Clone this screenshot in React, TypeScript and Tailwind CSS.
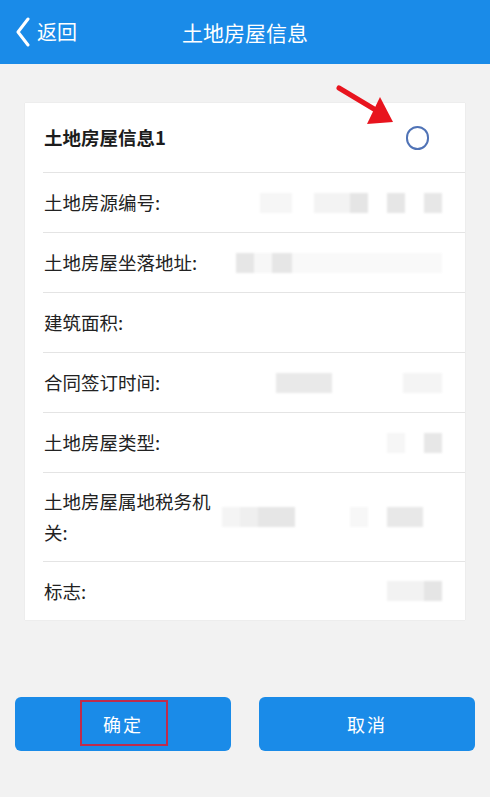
const FONT = { fontFamily: '"Noto Sans CJK SC", "Noto Sans", sans-serif' };

type Block = { w: number; c: string; gap?: number };

// blurred (redacted) values shown as soft mosaic blocks
function Mosaic({ blocks, h = 20 }: { blocks: Block[]; h?: number }) {
  return (
    <div className="flex items-center blur-[1px]">
      {blocks.map((b, i) => (
        <div
          key={i}
          style={{ width: b.w, height: h, background: b.c, marginLeft: b.gap ?? 0 }}
        />
      ))}
    </div>
  );
}

const ROWS: { label: string; h: number; blocks: Block[] }[] = [
  {
    label: "土地房源编号:",
    h: 60,
    blocks: [
      { w: 32, c: "#f6f6f6" },
      { w: 36, c: "#f3f3f3", gap: 22 },
      { w: 18, c: "#e5e5e5" },
      { w: 18, c: "#e6e6e6", gap: 19 },
      { w: 18, c: "#e7e7e7", gap: 19 },
    ],
  },
  {
    label: "土地房屋坐落地址:",
    h: 60,
    blocks: [
      { w: 18, c: "#e6e6e6" },
      { w: 18, c: "#f7f7f7" },
      { w: 20, c: "#e6e6e6" },
      { w: 150, c: "#f9f9f9" },
    ],
  },
  { label: "建筑面积:", h: 60, blocks: [] },
  {
    label: "合同签订时间:",
    h: 60,
    blocks: [
      { w: 56, c: "#e9e9e9" },
      { w: 39, c: "#f4f4f4", gap: 71 },
    ],
  },
  {
    label: "土地房屋类型:",
    h: 60,
    blocks: [
      { w: 18, c: "#f6f6f6" },
      { w: 18, c: "#e7e7e7", gap: 19 },
    ],
  },
  {
    label: "土地房屋属地税务机关:",
    h: 89,
    blocks: [
      { w: 18, c: "#f4f4f4" },
      { w: 18, c: "#efefef" },
      { w: 37, c: "#e6e6e6" },
      { w: 18, c: "#f7f7f7", gap: 55 },
      { w: 36, c: "#e8e8e8", gap: 19 },
      { w: 19, c: "transparent" },
    ],
  },
  {
    label: "标志:",
    h: 59,
    blocks: [
      { w: 37, c: "#f2f2f2" },
      { w: 18, c: "#e5e5e5" },
    ],
  },
];

export default function App() {
  return (
    <div className="relative min-h-[797px] w-[490px] bg-[#f2f2f2]" style={FONT}>
      {/* Header */}
      <div className="grid h-16 grid-cols-[1fr_auto_1fr] items-center bg-[#1a8be8] text-white">
        <div className="flex items-center gap-[7px] pl-4">
          <svg width="14" height="30" viewBox="0 0 14 30" fill="none">
            <path d="M12 2 L2 15 L12 28" stroke="white" strokeWidth="3" strokeLinecap="round" strokeLinejoin="round" />
          </svg>
          <span className="text-[20px] leading-none">返回</span>
        </div>
        <h1 className="text-[21px] leading-none">土地房屋信息</h1>
        <div />
      </div>

      {/* Card */}
      <div className="mx-[25px] mt-[39px] bg-white shadow-[0_0_1px_rgba(0,0,0,0.12)]">
        <div className="ml-[18px] flex h-[69px] items-center justify-between pl-[1px] pr-[36px]">
          <span className="text-[18.5px] font-bold text-[#1c1c1c]">土地房屋信息1</span>
          <span className="h-[24px] w-[23px] rounded-full border-2 border-[#5073b6]" />
        </div>
        {ROWS.map((r) => (
          <div
            key={r.label}
            className="ml-[18px] flex items-center justify-between border-t border-[#e4e4e4] pl-[1px] pr-[23px]"
            style={{ height: r.h }}
          >
            <span className="w-[176px] text-[18.5px] leading-[31px] text-[#222]">{r.label}</span>
            <Mosaic blocks={r.blocks} />
          </div>
        ))}
      </div>

      {/* Buttons */}
      <div className="mt-[77px] flex gap-[28px] px-[15px]">
        <button className="relative flex h-[54px] flex-1 items-center justify-center rounded-[6px] bg-[#1a8be8] text-[18px] tracking-[2px] text-white">
          确定
          <span className="absolute left-[65px] top-[3px] h-[46px] w-[88px] border-2 border-[#c02c4c]" />
        </button>
        <button className="flex h-[54px] flex-1 items-center justify-center rounded-[6px] bg-[#1a8be8] text-[18px] tracking-[2px] text-white">
          取消
        </button>
      </div>

      {/* annotation arrow */}
      <svg className="absolute left-0 top-0" width="490" height="160" viewBox="0 0 490 160">
        <line x1="339" y1="88" x2="384" y2="115" stroke="#e8141e" strokeWidth="5" strokeLinecap="round" />
        <polygon points="393,122 380,97 367,124" fill="#e8141e" />
      </svg>
    </div>
  );
}
